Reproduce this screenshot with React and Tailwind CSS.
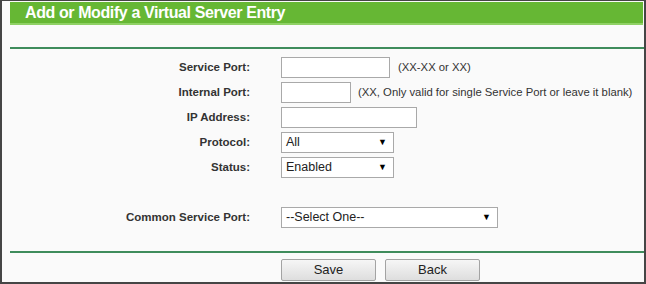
import React from 'react';

const font = { fontFamily: '"Liberation Sans", Arial, sans-serif' };

const Row = ({ label, children }) => (
  <div className="flex items-center h-[25px]">
    <div className="w-[248px] shrink-0 text-right text-[11.5px] font-bold text-[#333]">{label}</div>
    <div className="pl-[31px] flex items-center whitespace-nowrap">{children}</div>
  </div>
);

const TextBox = ({ w }) => (
  <div className={`${w} shrink-0 h-[21px] bg-white border border-[#a9a9a9]`} />
);

const Select = ({ w, value }) => (
  <div className={`${w} shrink-0 h-[21px] bg-white border border-[#a9a9a9] flex items-center justify-between pl-[4px] pr-[6px] text-[12.5px] text-[#222]`}>
    <span>{value}</span>
    <span className="text-[9px] text-black">▼</span>
  </div>
);

const Button = ({ children }) => (
  <button className="w-[95px] h-[22px] border border-[#a3a3a3] rounded-[2px] bg-gradient-to-b from-[#f6f6f6] to-[#dedede] text-[13px] text-[#222]">
    {children}
  </button>
);

export default function App() {
  return (
    <div style={font} className="w-[646px] h-[284px] overflow-hidden bg-[#fafafa] border-l-2 border-r-2 border-t border-b-2 border-[#454545]">
      {/* title bar */}
      <div className="ml-[8px] mr-[1px] mt-[1px] h-[23px] bg-[#66b734] border-b-2 border-[#8fd165] flex items-center pl-[15px]">
        <span className="text-white font-bold text-[16px] tracking-[-0.4px]">Add or Modify a Virtual Server Entry</span>
      </div>

      <div className="ml-[8px] mt-[22px] h-[2px] bg-[#3f8c5c]" />

      <div className="pt-[6px]">
        <Row label="Service Port:">
          <TextBox w="w-[109px]" />
          <span className="ml-[8px] text-[11.3px] text-[#333]">(XX-XX or XX)</span>
        </Row>
        <Row label="Internal Port:">
          <TextBox w="w-[70px]" />
          <span className="ml-[7px] text-[11.3px] text-[#333]">(XX, Only valid for single Service Port or leave it blank)</span>
        </Row>
        <Row label="IP Address:">
          <TextBox w="w-[136px]" />
        </Row>
        <Row label="Protocol:">
          <Select w="w-[113px]" value="All" />
        </Row>
        <Row label="Status:">
          <Select w="w-[113px]" value="Enabled" />
        </Row>
        <div className="h-[25px]" />
        <Row label="Common Service Port:">
          <Select w="w-[217px]" value="--Select One--" />
        </Row>
      </div>

      <div className="ml-[8px] mt-[21px] h-[2px] bg-[#3f8c5c]" />

      <div className="flex gap-[9px] pl-[279px] pt-[6px]">
        <Button>Save</Button>
        <Button>Back</Button>
      </div>
    </div>
  );
}
